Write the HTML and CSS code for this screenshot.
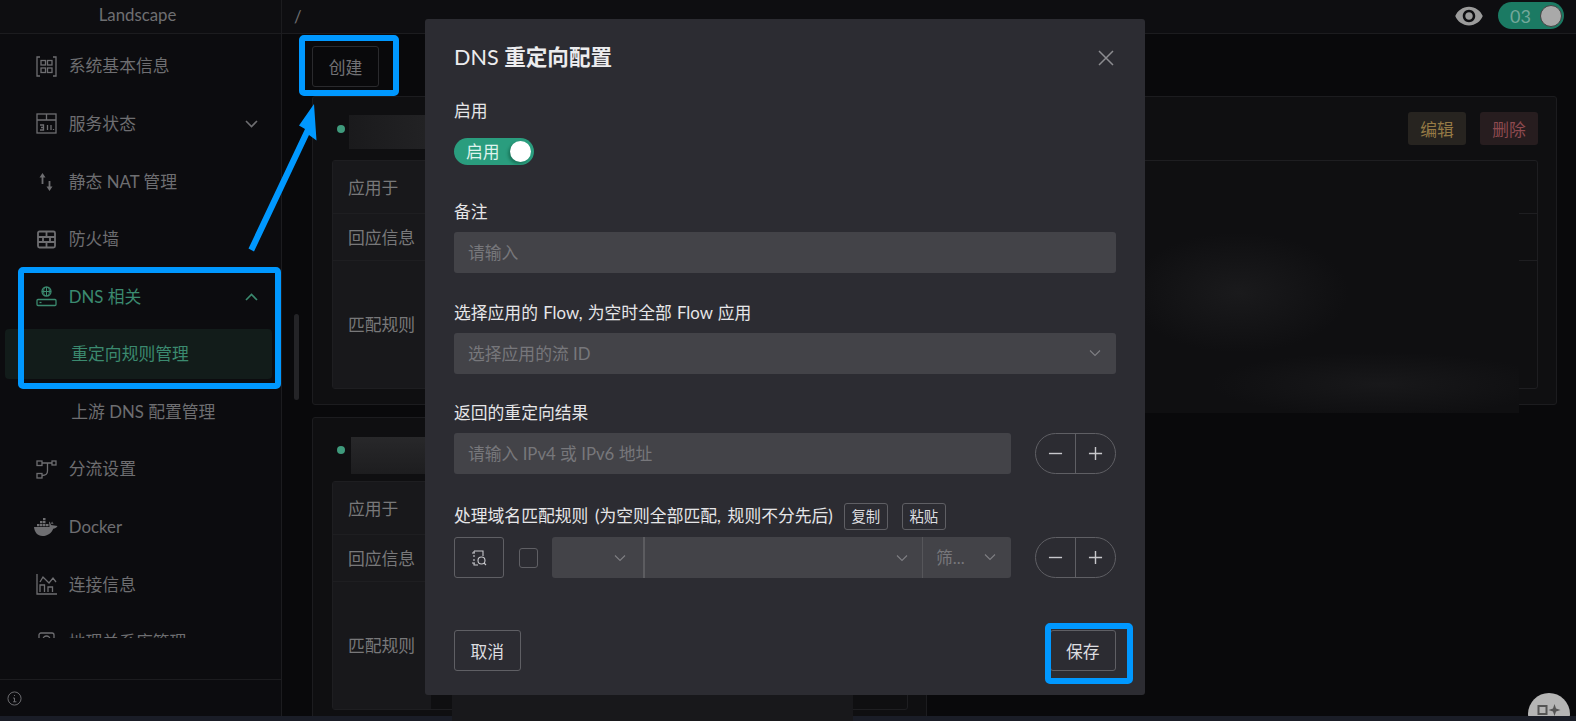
FILE: index.html
```html
<!DOCTYPE html>
<html lang="zh-CN">
<head>
    <meta charset="UTF-8">
    <meta name="viewport" content="width=device-width, initial-scale=1.0">
    <title>Landscape - DNS 重定向配置</title>
    <link rel="stylesheet" href="styles.css">
</head>
<body>
<div class="app">
    <header class="topbar">
        <div class="brand">Landscape</div>
        <div class="crumb">/</div>
        <svg class="eye" viewBox="0 0 24 24"><path d="M12 4.5C7 4.5 2.73 7.61 1 12c1.73 4.39 6 7.5 11 7.5s9.27-3.11 11-7.5c-1.73-4.39-6-7.5-11-7.5zM12 17c-2.76 0-5-2.24-5-5s2.24-5 5-5 5 2.24 5 5-2.24 5-5 5zm0-8c-1.66 0-3 1.34-3 3s1.34 3 3 3 3-1.34 3-3-1.34-3-3-3z"/></svg>
        <div class="theme-toggle"><span>03</span><i class="theme-knob"></i></div>
    </header>

    <div class="body">
        <aside class="sidebar">
            <nav class="nav">
                <a class="nav-item">
                    <svg class="nav-icon" viewBox="0 0 21 21"><path d="M4 1H1v19h3M17 1h3v19h-3"/><rect x="5" y="4.500" width="4.500" height="4.500"/><rect x="11.500" y="4.500" width="4.500" height="4.500"/><rect x="5" y="12" width="4.500" height="4.500"/><rect x="11.500" y="12" width="4.500" height="4.500"/></svg>
                    <span>系统基本信息</span>
                </a>
                <a class="nav-item">
                    <svg class="nav-icon" viewBox="0 0 21 21"><rect x="1" y="1" width="19" height="19"/><path d="M1 7h19M10.500 1v6M4 12h3.500v2.500H5M7.500 14.500V17H4M11.500 12v5M15 12v5M17.500 16v1"/></svg>
                    <span>服务状态</span>
                    <svg class="chevron" viewBox="0 0 13 8"><path d="M1 1l5.500 5.500L12 1"/></svg>
                </a>
                <a class="nav-item">
                    <svg class="nav-icon" viewBox="0 0 21 21"><path d="M6.500 13V5M13.500 10v7" stroke-width="1.800"/><path class="fill" d="M6.500 2L3.500 6.500h6zM13.500 20l-3-4.500h6z"/></svg>
                    <span>静态 NAT 管理</span>
                </a>
                <a class="nav-item">
                    <svg class="nav-icon" viewBox="0 0 21 21"><rect x="2" y="2.500" width="17" height="16" rx="1.500" stroke-width="1.800"/><path d="M2 8h17M2 13h17M10.500 2.500V8M7 8v5M14 8v5M10.500 13v5.500" stroke-width="1.800"/></svg>
                    <span>防火墙</span>
                </a>
                <a class="nav-item is-open">
                    <svg class="nav-icon" viewBox="0 0 21 21"><circle cx="10.500" cy="5.500" r="4.500"/><path d="M6 5.500h9M10.500 1v9M8.500 1.500c-1.200 2.500-1.200 5.500 0 8M12.500 1.500c1.200 2.500 1.200 5.500 0 8" stroke-width="1"/><rect x="1" y="13.500" width="19" height="6" rx="1"/><path d="M3.500 16.500h2"/></svg>
                    <span>DNS 相关</span>
                    <svg class="chevron" viewBox="0 0 13 8"><path d="M1 7l5.500-5.500L12 7"/></svg>
                </a>
                <a class="nav-item sub is-active"><span>重定向规则管理</span></a>
                <a class="nav-item sub"><span>上游 DNS 配置管理</span></a>
                <a class="nav-item">
                    <svg class="nav-icon" viewBox="0 0 21 21"><rect x="1" y="2" width="5" height="4.500"/><rect x="16" y="2" width="4" height="4"/><rect x="1" y="14.500" width="5" height="4.500"/><path d="M6 4h10M11.500 4v8c0 2.500-2 4.500-5.500 4.500"/></svg>
                    <span>分流设置</span>
                </a>
                <a class="nav-item">
                    <svg class="nav-icon docker" viewBox="0 0 24 18"><path class="fill" d="M9 0h2.500v2.300H9zM6 3h2.500v2.300H6zM9 3h2.500v2.300H9zM3 6h2.500v2.300H3zM6 6h2.500v2.300H6zM9 6h2.500v2.300H9zM12 6h2.500v2.300H12zM15 3.500c.900.500 1.500 1.500 1.600 2.700.900-.500 2.400-.600 3.400 0-.4-.800-1.400-1.300-1.900-2.800-.500 1.200-1.400 2-1.100 3.500L23.500 8c-1 2-2.900 2.600-4.300 2.700C17.700 15 13.500 18 8.500 18 3.500 18 .4 14 0 9h15.500z"/></svg>
                    <span>Docker</span>
                </a>
                <a class="nav-item">
                    <svg class="nav-icon" viewBox="0 0 21 21"><path d="M1 0v20h20M4 18v-7h4.500v7M12 18v-5h4.500v5M4 8l3-5 6 6 4-5 3 4"/></svg>
                    <span>连接信息</span>
                </a>
                <a class="nav-item">
                    <svg class="nav-icon" viewBox="0 0 21 21"><rect x="3" y="1" width="15" height="15" rx="2"/><circle cx="10.500" cy="7.500" r="3.500"/></svg>
                    <span>地理关系库管理</span>
                </a>
            </nav>
            <div class="side-foot">
                <svg class="info" viewBox="0 0 16 16"><circle cx="8" cy="8" r="7"/><path d="M6.500 7.500H8v4M6.500 11.500h3.500M8 4.300v1"/></svg>
            </div>
        </aside>

        <main class="main">
            <div class="toolbar"><button class="btn create">创建</button></div>

            <section class="card">
                <div class="card-head">
                    <i class="dot"></i><i class="mask"></i>
                    <button class="tag warn">编辑</button>
                    <button class="tag danger">删除</button>
                </div>
                <div class="info-table">
                    <div class="row r1"><div class="key">应用于</div></div>
                    <div class="row r2"><div class="key">回应信息</div></div>
                    <div class="row r3"><div class="key">匹配规则</div></div>
                </div>
            </section>

            <section class="card card-short">
                <div class="card-head">
                    <i class="dot"></i><i class="mask mask-2"></i>
                </div>
                <div class="info-table">
                    <div class="row r1"><div class="key">应用于</div></div>
                    <div class="row r2"><div class="key">回应信息</div></div>
                    <div class="row r3"><div class="key">匹配规则</div></div>
                </div>
            </section>
        </main>
    </div>
    <div class="strip"></div>

    <!-- things lying over the page -->
    <i class="side-scroll"></i>
    <i class="blur-right"></i>
    <i class="blur-bottom"></i>
    <div class="float-btn">
        <svg viewBox="0 0 24 14"><rect x="1.500" y="3" width="8" height="8" fill="none" stroke="#555" stroke-width="2"/><path d="M17.500 1l1.500 4.500 4.500 1.500-4.500 1.500-1.500 4.500-1.500-4.500L11.500 7l4.500-1.500z" fill="#555"/></svg>
    </div>

    <div class="modal">
        <div class="modal-head">
            <h2>DNS <b>重定向配置</b></h2>
            <svg class="close" viewBox="0 0 16 16"><path d="M1 1l14 14M15 1L1 15"/></svg>
        </div>

        <div class="field">
            <div class="label">启用</div>
            <div class="control">
                <div class="switch"><span>启用</span><i></i></div>
            </div>
        </div>
        <div class="field">
            <div class="label">备注</div>
            <div class="control"><div class="input">请输入</div></div>
        </div>
        <div class="field">
            <div class="label">选择应用的 Flow, 为空时全部 Flow 应用</div>
            <div class="control">
                <div class="input select">选择应用的流 ID
                    <svg class="caret" viewBox="0 0 12 8"><path d="M1 1.500l5 5 5-5"/></svg>
                </div>
            </div>
        </div>
        <div class="field">
            <div class="label">返回的重定向结果</div>
            <div class="control">
                <div class="input grow">请输入 IPv4 或 IPv6 地址</div>
                <div class="stepper">
                    <span><svg viewBox="0 0 16 16"><path d="M1 8h14"/></svg></span>
                    <span><svg viewBox="0 0 16 16"><path d="M1 8h14M8 1v14"/></svg></span>
                </div>
            </div>
        </div>
        <div class="field">
            <div class="label label-tools">处理域名匹配规则 (为空则全部匹配, 规则不分先后)
                <button class="mini first">复制</button>
                <button class="mini">粘贴</button>
            </div>
            <div class="control">
                <button class="btn icon-btn">
                    <svg viewBox="0 0 16 16"><path d="M3 1h9v5M3 1v2M3 5v2M3 9v2M3 13v2h4M1 3h3M1 13h3"/><circle cx="10.500" cy="10.500" r="3.500"/><path d="M13 13l2 2"/></svg>
                </button>
                <i class="checkbox"></i>
                <div class="rule">
                    <div class="seg s1"><svg class="caret" viewBox="0 0 12 8"><path d="M1 1.500l5 5 5-5"/></svg></div>
                    <div class="seg s2"><svg class="caret" viewBox="0 0 12 8"><path d="M1 1.500l5 5 5-5"/></svg></div>
                    <div class="seg s3">筛...<svg class="caret" viewBox="0 0 12 8"><path d="M1 1.500l5 5 5-5"/></svg></div>
                </div>
                <div class="stepper">
                    <span><svg viewBox="0 0 16 16"><path d="M1 8h14"/></svg></span>
                    <span><svg viewBox="0 0 16 16"><path d="M1 8h14M8 1v14"/></svg></span>
                </div>
            </div>
        </div>

        <div class="modal-foot">
            <button class="btn">取消</button>
            <button class="btn">保存</button>
        </div>
    </div>

    <i class="mark mark-create"></i>
    <i class="mark mark-menu"></i>
    <i class="mark mark-save"></i>
    <svg class="arrow" viewBox="0 0 80 150"><path d="M5.500 146.500L62 27l-6-3.500L71 2l2.500 36.500-7.500-5.500L11 149.500z" /></svg>
</div>
</body>
</html>
```

FILE: styles.css
```css
* {
    box-sizing: border-box;
}
html, body {
    margin: 0;
    height: 100%;
    overflow: hidden;
}
body {
    font-family: Lato, "Noto Sans CJK SC", sans-serif;
    font-size: 16.8px;
    color: #e6e6e8;
    background: #09090b;
}
button {
    font: inherit;
    background: none;
    cursor: pointer;
}
i {
    display: block;
}

.app {
    position: relative;
    width: 1576px;
    height: 721px;
    display: flex;
    flex-direction: column;
    overflow: hidden;
}

/* top bar */
.topbar {
    height: 34px;
    flex: none;
    display: flex;
    align-items: center;
    background: #0e0e11;
    border-bottom: 1px solid #1c1c1f;
    color: #6e6e71;
}
.brand {
    width: 282px;
    height: 100%;
    padding-right: 6px;
    line-height: 30px;
    text-align: center;
    border-right: 1px solid #1c1c1f;
}
.crumb {
    margin-left: 12px;
    flex: 1;
}
.eye {
    width: 30px;
    height: 30px;
    margin-bottom: 2px;
    fill: #9b9b9b;
}
.theme-toggle {
    width: 66px;
    height: 27px;
    margin: 0 12px 2px 14px;
    padding: 0 2px 0 12px;
    display: flex;
    align-items: center;
    justify-content: space-between;
    border-radius: 14px;
    background: #1b7a63;
    color: #74a89b;
    font-size: 18px;
}
.theme-knob {
    width: 22px;
    height: 22px;
    border-radius: 50%;
    background: #a9a9a9;
    border: 1px solid #444;
}

/* sidebar */
.body {
    flex: 1;
    min-height: 0;
    display: flex;
}
.sidebar {
    width: 282px;
    flex: none;
    display: flex;
    flex-direction: column;
    background: #0c0c0f;
    border-right: 1px solid #1c1c1f;
}
.nav {
    height: 604px;
    overflow: hidden;
    color: #6e6e71;
}
.nav-item {
    height: 50.4px;
    margin: 7.2px 9px 0 4.8px;
    padding-left: 31px;
    display: flex;
    align-items: center;
    gap: 12px;
    border-radius: 4px;
}
.nav-item span {
    padding-bottom: 2px;
}
.nav-icon {
    width: 21px;
    height: 21px;
    flex: none;
    fill: none;
    stroke: currentColor;
    stroke-width: 1.3;
}
.nav-icon .fill {
    fill: currentColor;
    stroke: none;
}
.nav-icon.docker {
    width: 24px;
    height: 18px;
    margin: 0 -1.5px;
    stroke: none;
}
.chevron {
    width: 13px;
    height: 8px;
    margin-left: auto;
    margin-right: 14px;
    fill: none;
    stroke: currentColor;
    stroke-width: 1.6;
}
.nav-item.is-open,
.nav-item.is-active {
    color: #3b8a6f;
}
.nav-item.sub {
    padding-left: 66.5px;
}
.nav-item.is-active {
    background: #121c1a;
}
.side-foot {
    margin-top: auto;
    height: 37px;
    padding: 11px 7px;
    border-top: 1px solid #1c1c1f;
}
.info {
    display: block;
    width: 15px;
    height: 15px;
    fill: none;
    stroke: #727275;
}
.side-scroll {
    position: absolute;
    left: 294px;
    top: 314px;
    width: 5px;
    height: 86px;
    border-radius: 3px;
    background: #242427;
}

/* page content behind the dialog */
.main {
    flex: 1;
    min-width: 0;
    overflow: hidden;
    padding: 12px 19px 0 30px;
    color: #78787a;
}
.toolbar {
    height: 50px;
}
.btn {
    height: 41px;
    min-width: 66.5px;
    padding: 0 15px;
    border: 1px solid #5f5f64;
    border-radius: 3px;
    color: #dedee0;
}
.btn.create {
    min-width: 67px;
    border-color: #2a2a2d;
    color: #727275;
}
.card {
    height: 308.5px;
    margin-bottom: 12.5px;
    padding: 0 18px 0 19px;
    background: #0f0f11;
    border: 1px solid #1c1c1f;
    border-radius: 3px;
}
.card-short {
    width: 615px;
}
.card-head {
    height: 63px;
    display: flex;
    align-items: center;
    gap: 14px;
}
.dot {
    width: 8px;
    height: 8px;
    margin: 0 0 0 5px;
    border-radius: 50%;
    background: #3f9a7c;
}
.mask {
    width: 76px;
    height: 34px;
    margin: 6px auto 0 -10px;
    background: linear-gradient(90deg, #1a1a1c, #222224);
}
.mask-2 {
    height: 37px;
    margin: 11px auto 0 -8px;
    background: linear-gradient(#28282a, #1d1d1f);
}
.tag {
    width: 58px;
    height: 33px;
    padding: 0;
    border: none;
    border-radius: 3px;
}
.tag.warn {
    background: #272420;
    color: #957a45;
}
.tag.danger {
    background: #271d1f;
    color: #8e4a4f;
}
.info-table {
    height: 229px;
    border: 1px solid #1e1e21;
    border-radius: 3px;
}
.row {
    display: flex;
    border-bottom: 1px solid #1e1e21;
}
.row.r1 { height: 53px; }
.row.r2 { height: 47px; }
.row.r3 { height: 127px; border-bottom: none; }
.key {
    width: 98px;
    padding: 0 0 1px 15px;
    display: flex;
    align-items: center;
    background: #18181b;
}

/* blurred-out values */
.blur-right {
    position: absolute;
    left: 1145px;
    top: 172px;
    width: 374px;
    height: 241px;
    background:
        radial-gradient(ellipse 110px 60px at 25% 50%, #1a1a1c, transparent),
        radial-gradient(ellipse 170px 32px at 63% 88%, #18181a, transparent),
        #0f0f11;
}
.blur-bottom {
    position: absolute;
    left: 452px;
    top: 690px;
    width: 401px;
    height: 31px;
    z-index: 2;
    background: #18181b;
}
.strip {
    height: 5px;
    flex: none;
    position: relative;
    z-index: 2;
    background: #1a1d27;
}
.float-btn {
    position: absolute;
    left: 1528px;
    top: 693px;
    width: 42px;
    height: 42px;
    padding: 10px 9px;
    border-radius: 50%;
    background: #b5b5b5;
}
.float-btn svg {
    display: block;
    width: 24px;
    height: 14px;
}

/* dialog */
.modal {
    position: absolute;
    z-index: 3;
    left: 425px;
    top: 19px;
    width: 720px;
    height: 676px;
    padding: 0 29px 24px 29px;
    display: flex;
    flex-direction: column;
    background: #2c2c32;
    border-radius: 3px;
}
.modal-head {
    height: 79px;
    padding-top: 24px;
    display: flex;
    justify-content: space-between;
}
.modal-head h2 {
    margin: 0;
    font-size: 21.6px;
    line-height: 28px;
    font-weight: 400;
    color: #ececee;
}
.modal-head b {
    font-weight: 700;
}
.close {
    width: 16px;
    height: 16px;
    margin: 7px 2px 0 0;
    fill: none;
    stroke: #8c8c90;
    stroke-width: 1.5;
}
.field {
    height: 100.8px;
}
.label {
    height: 33px;
    line-height: 25px;
    word-spacing: 1px;
}
.label-tools {
    height: 36px;
    display: flex;
    align-items: flex-start;
    line-height: 29px;
    gap: 14px;
    word-spacing: 2.5px;
}
.mini {
    height: 27px;
    width: 44px;
    margin-top: 2px;
    padding: 0;
    font-size: 14.4px;
    line-height: 23px;
    border: 1px solid #5f5f64;
    border-radius: 3px;
    color: #dedee0;
}
.mini.first {
    margin-left: -3px;
}
.control {
    height: 41px;
    display: flex;
    align-items: center;
}
.input {
    position: relative;
    flex: 1;
    height: 41px;
    padding: 0 14px 1px;
    display: flex;
    align-items: center;
    border-radius: 3px;
    background: #434348;
    color: #77777b;
}
.caret {
    width: 12px;
    height: 8px;
    flex: none;
    fill: none;
    stroke: #7f7f83;
    stroke-width: 1.1;
}
.select .caret {
    position: absolute;
    right: 15px;
}
.stepper {
    width: 81px;
    height: 41px;
    margin-left: 24px;
    flex: none;
    display: flex;
    border: 1px solid #5f5f64;
    border-radius: 21px;
}
.stepper span {
    flex: 1;
    display: flex;
    align-items: center;
    justify-content: center;
}
.stepper span + span {
    border-left: 1px solid #5f5f64;
}
.stepper svg {
    width: 15px;
    height: 15px;
    fill: none;
    stroke: #c8c8cc;
    stroke-width: 1.5;
}
.switch {
    width: 80px;
    height: 27px;
    padding: 0 3px 0 12px;
    display: flex;
    align-items: center;
    justify-content: space-between;
    border-radius: 14px;
    background: #2a9d7e;
    color: #dff3ec;
}
.switch span {
    padding-bottom: 2px;
}
.switch i {
    width: 21px;
    height: 21px;
    border-radius: 50%;
    background: #fff;
    box-shadow: -2px 2px 3px rgba(0, 60, 40, 0.4);
}
.icon-btn {
    width: 50px;
    min-width: 0;
    padding: 0;
    display: flex;
    align-items: center;
    justify-content: center;
}
.icon-btn svg {
    width: 16px;
    height: 16px;
    fill: none;
    stroke: #c8c8cc;
    stroke-width: 1.1;
}
.checkbox {
    width: 19px;
    height: 20px;
    margin: 0 14px 0 15px;
    border: 1px solid #5f5f64;
    border-radius: 3px;
}
.rule {
    flex: 1;
    height: 41px;
    display: flex;
    border-radius: 3px;
    background: #434348;
    color: #77777b;
}
.seg {
    display: flex;
    align-items: center;
    justify-content: flex-end;
    padding-right: 15px;
}
.seg.s1 {
    width: 93px;
    padding-right: 17px;
    border-right: 2px solid #5c5c60;
}
.seg.s2 {
    flex: 1;
    padding-right: 14px;
    border-right: 1px solid #56565a;
}
.seg.s3 {
    width: 88px;
    padding: 0 15px 2px 13px;
    justify-content: space-between;
}
.modal-foot {
    margin-top: auto;
    display: flex;
    justify-content: space-between;
}

/* annotations drawn on the screenshot */
.mark {
    position: absolute;
    z-index: 4;
    border: 6px solid #0098ff;
    border-radius: 5px;
}
.mark-create {
    left: 299px;
    top: 35px;
    width: 100px;
    height: 61px;
}
.mark-menu {
    left: 18px;
    top: 267px;
    width: 263px;
    height: 122px;
}
.mark-save {
    left: 1045px;
    top: 623px;
    width: 88px;
    height: 61px;
}
.arrow {
    position: absolute;
    z-index: 4;
    left: 243px;
    top: 102px;
    width: 80px;
    height: 150px;
    fill: #0098ff;
}
```
